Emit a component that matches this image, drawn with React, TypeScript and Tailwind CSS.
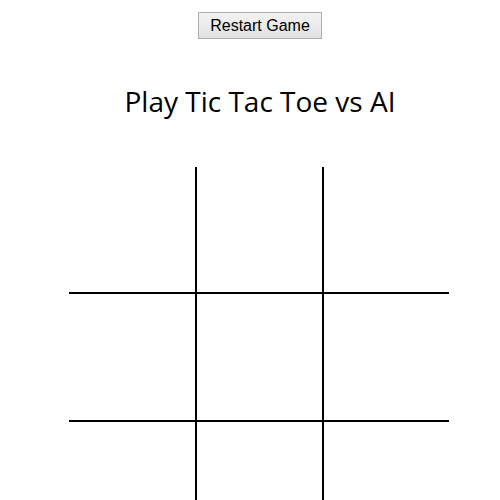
import { FC } from "react";

const cells = [0, 1, 2, 3, 4, 5, 6, 7, 8];

/**
 * One square of the board. Lines come from right and bottom borders.
 */
const Cell: FC<{ index: number }> = ({ index }) => {
  const col = index % 3;
  const row = Math.floor(index / 3);
  return (
    <div
      className={[
        "bg-white",
        col < 2 ? "border-r-2 border-black" : "",
        row < 2 ? "border-b-2 border-black" : "",
      ].join(" ")}
    />
  );
};

export default function App() {
  return (
    <div className="flex h-[500px] w-[500px] flex-col items-center overflow-hidden bg-white pl-[20px] pt-[12px]">
      {/* Restart */}
      <button className="h-[27px] w-[124px] shrink-0 border border-[#adadad] bg-gradient-to-b from-[#f2f2f2] to-[#e2e2e2] font-['Liberation_Sans',Arial,sans-serif] text-[16px] leading-none text-black">
        Restart Game
      </button>

      {/* Title */}
      <h1 className="mt-[42px] shrink-0 font-['Open_Sans',sans-serif] text-[28px] font-normal leading-[40px] text-black">
        Play Tic Tac Toe vs AI
      </h1>

      {/* Board */}
      <div className="mt-[46px] mr-[2px] grid shrink-0 grid-cols-[128px_127px_125px] grid-rows-[127px_128px_127px]">
        {cells.map((i) => (
          <Cell key={i} index={i} />
        ))}
      </div>
    </div>
  );
}
